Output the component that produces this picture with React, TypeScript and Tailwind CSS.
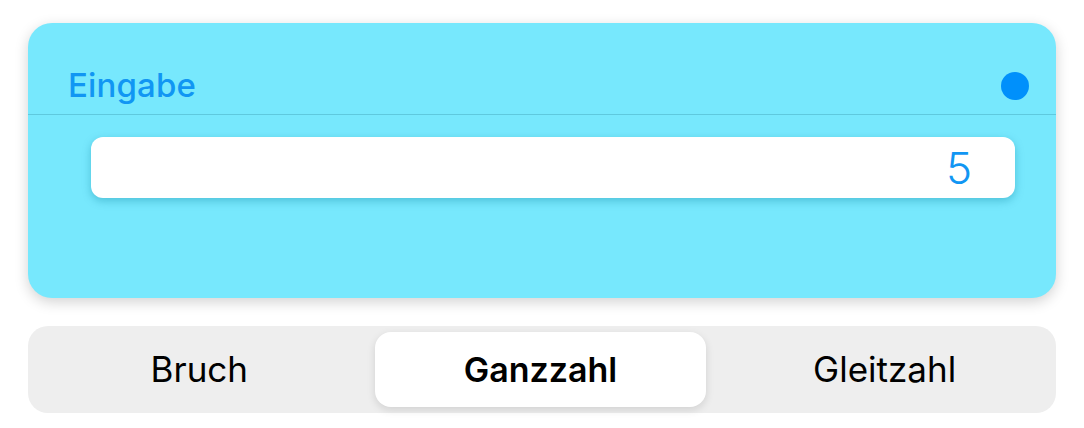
import React from "react";

export default function App() {
  return (
    <div className="w-[1084px] h-[428px] bg-white overflow-hidden" style={{ fontFamily: "Inter, 'Noto Sans', sans-serif" }}>
      <div className="pt-[23px] px-[28px]">
        <div className="h-[275px] rounded-[24px] bg-[#77e8fd] shadow-[0_4px_14px_rgba(0,0,0,0.18)] flex flex-col">
          <div className="h-[92px] flex items-end justify-between pl-[40px] pr-[27px] pb-[12px] border-b border-[#5fc9de]">
            <span className="text-[33px] font-medium text-[#1196f3] leading-none tracking-[0.15px]">Eingabe</span>
            <span className="w-[28px] h-[28px] rounded-full bg-[#0090fb] mb-[2px]" />
          </div>
          <div className="pt-[22px] pl-[63px] pr-[41px]">
            <div className="h-[61px] rounded-[12px] bg-white shadow-[0_3px_8px_rgba(0,120,150,0.35)] flex items-center justify-end pr-[43px]">
              <span className="text-[44px] font-light text-[#1196f3] leading-none">5</span>
            </div>
          </div>
        </div>
      </div>
      <div className="px-[28px] pt-[28px]">
        <div className="h-[87px] rounded-[20px] bg-[#eeeeee] grid grid-cols-3">
          <div className="flex items-center justify-center text-[35px] text-black">Bruch</div>
          <div className="flex py-[6px] pl-[4px] pr-[7px]">
            <div className="w-full h-full rounded-[16px] bg-white shadow-[0_3px_8px_rgba(0,0,0,0.12)] flex items-center justify-center text-[34px] font-semibold text-black">Ganzzahl</div>
          </div>
          <div className="flex items-center justify-center text-[35px] text-black">Gleitzahl</div>
        </div>
      </div>
    </div>
  );
}
